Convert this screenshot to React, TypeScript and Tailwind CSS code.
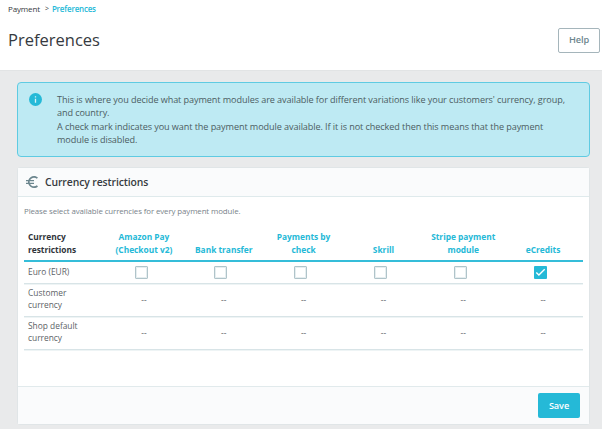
import React from 'react';

const modules = [
  { lines: ['Amazon Pay', '(Checkout v2)'], checked: false },
  { lines: ['Bank transfer'], checked: false },
  { lines: ['Payments by', 'check'], checked: false },
  { lines: ['Skrill'], checked: false },
  { lines: ['Stripe payment', 'module'], checked: false },
  { lines: ['eCredits'], checked: true },
];

const grid = 'grid grid-cols-[80px_repeat(6,minmax(0,1fr))]';

function Checkbox({ checked }: { checked: boolean }) {
  return checked ? (
    <span className="flex size-[13px] items-center justify-center rounded-[1px] bg-[#25b9d7]">
      <svg viewBox="0 0 13 13" className="size-[13px]" fill="none" stroke="#fff" strokeWidth="1.4">
        <path d="M2.3 6.4 L4.900 9 L10.700 3.300" />
      </svg>
    </span>
  ) : (
    <span className="size-[13px] rounded-[1px] border border-[#b0c4ca] bg-white shadow-[inset_0_0_0_1px_#e6eef0]" />
  );
}

function DashRow({ lines }: { lines: string[] }) {
  return (
    <div className={`${grid} h-[33.4px] items-center border-b border-[#d8e4e7] shadow-[0_1px_0_#eef4f5]`}>
      <div className="pb-[1.5px] pl-1 text-[8.4px] leading-3 text-[#5c6266]">
        {lines.map((l) => (
          <div key={l}>{l}</div>
        ))}
      </div>
      {modules.map((m) => (
        <div key={m.lines[0]} className="text-center text-[8.4px] leading-3 text-[#5c6266]">
          --
        </div>
      ))}
    </div>
  );
}

export default function App() {
  return (
    <div className="flex h-[429px] w-[602px] flex-col overflow-hidden whitespace-nowrap bg-[#e9eaeb] font-['Open_Sans','Noto_Sans',sans-serif] text-[#363a41]">
      <header className="h-[71px] shrink-0 border-b border-[#e2e4e5] bg-white">
        <nav className="flex h-[17px] items-center pl-2 text-[8px] leading-none">
          <span className="tracking-[-0.15px]">Payment</span>
          <span className="ml-[5px] text-[7px]">&gt;</span>
          <span className="ml-[3px] font-semibold tracking-[-0.2px] text-[#25b9d7]">Preferences</span>
        </nav>
        <div className="flex items-center justify-between pl-2 pr-[2px] pt-[10px]">
          <h1 className="text-[16.5px] leading-[26px]">Preferences</h1>
          <button className="h-[25px] w-[42px] rounded-[2px] border border-[#a5b5bb] text-[9.2px] font-semibold leading-none tracking-[-0.1px] text-[#6c868e]">
            Help
          </button>
        </div>
      </header>

      <main className="flex flex-col pl-[17px] pr-3 pt-[11px]">
        <section className="flex h-[75px] shrink-0 rounded-[4px] border border-[#5fcbe2] bg-[#beeaf3] pl-[11px] pt-[10px]">
          <svg viewBox="0 0 14 14" className="size-[13px]">
            <circle cx="7" cy="7" r="7" fill="#25b9d7" />
            <path d="M6.3 3.5h1.4v1.4H6.3zM6.3 6.2h1.4v4.3H6.3z" fill="#d9f3f8" />
          </svg>
          <p className="ml-[15px] text-[9.1px] leading-[13.35px] tracking-[-0.085px] text-[#4c5d62]">
            This is where you decide what payment modules are available for different variations like your customers' currency, group,
            <br />
            and country.
            <br />
            A check mark indicates you want the payment module available. If it is not checked then this means that the payment
            <br />
            module is disabled.
          </p>
        </section>

        <section className="mt-[10px] flex h-[258px] shrink-0 flex-col rounded-[3px] border border-[#e0e5e7] bg-white">
          <div className="flex h-[29px] shrink-0 items-center border-b border-[#dfeaec] bg-[#fafbfc] pl-[6px]">
            <svg viewBox="0 0 24 24" className="size-4" fill="#6c868e">
              <path d="M15 18.5c-2.51 0-4.68-1.42-5.76-3.5H15v-2H8.58c-.05-.33-.08-.66-.08-1s.03-.67.08-1H15V9H9.240C10.320 6.920 12.500 5.500 15 5.500c1.610 0 3.090.590 4.230 1.570L21 5.300C19.410 3.870 17.300 3 15 3c-3.920 0-7.240 2.510-8.480 6H3v2h3.060c-.040.330-.060.660-.060 1s.020.670.060 1H3v2h3.520c1.240 3.490 4.560 6 8.480 6 2.310 0 4.410-.870 6-2.300l-1.780-1.770c-1.130.980-2.600 1.570-4.220 1.570z" />
            </svg>
            <h2 className="ml-[5px] text-[10.4px] font-semibold leading-none tracking-[-0.1px]">Currency restrictions</h2>
          </div>

          <div className="px-[6px] pt-[8px]">
            <p className="text-[7.9px] leading-3 tracking-[-0.115px] text-[#79838a]">Please select available currencies for every payment module.</p>
            <div className={`${grid} mt-[12px] h-[33px] items-end border-b-2 border-[#35bdd9] pb-[3px] text-[8.4px] font-bold leading-[12.8px] tracking-[-0.02px]`}>
              <div className="pl-1 text-[#30343a]">
                Currency
                <br />
                restrictions
              </div>
              {modules.map((m) => (
                <div key={m.lines[0]} className="text-center text-[#25b9d7]">
                  {m.lines.map((l) => (
                    <div key={l}>{l}</div>
                  ))}
                </div>
              ))}
            </div>
            <div className={`${grid} h-[21.5px] items-center border-b border-[#d8e4e7] shadow-[0_1px_0_#eef4f5]`}>
              <div className="pb-px pl-1 text-[8.4px] leading-3 text-[#5c6266]">Euro (EUR)</div>
              {modules.map((m) => (
                <div key={m.lines[0]} className="flex justify-center pr-[5.5px]">
                  <Checkbox checked={m.checked} />
                </div>
              ))}
            </div>
            <DashRow lines={['Customer', 'currency']} />
            <DashRow lines={['Shop default', 'currency']} />
          </div>

          <div className="mt-auto flex h-[38px] items-center justify-end border-t border-[#e1eaec] bg-[#fafbfc] pr-[9px]">
            <button className="h-[25px] w-[42px] rounded-[2px] bg-[#25b9d7] text-[9.2px] font-semibold leading-none tracking-[-0.1px] text-white">
              Save
            </button>
          </div>
        </section>
      </main>
    </div>
  );
}
